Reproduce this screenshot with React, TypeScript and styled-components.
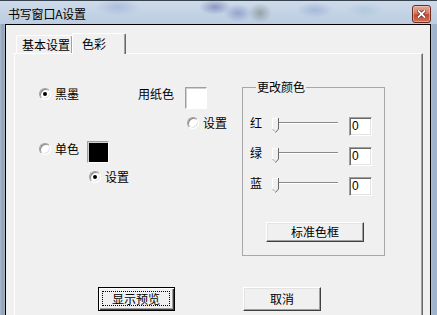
import React from 'react';
import styled, { createGlobalStyle } from 'styled-components';

const GlobalStyle = createGlobalStyle`
  html, body {
    margin: 0;
    padding: 0;
    background: #b9c9dc;
  }
  body {
    font-family: "Noto Sans CJK SC", "Liberation Sans", sans-serif;
    font-size: 12px;
    color: #000;
  }
`;

const Window = styled.div`
  width: 437px;
  height: 315px;
  overflow: hidden;
  display: flex;
  flex-direction: column;
  background: linear-gradient(90deg, #a9b9cb 0, #8fa1b6 3px, #b7c7da 6px, #b7c7da 430px, #9fb4cc 433px);
`;

const TitleBar = styled.div`
  height: 24px;
  flex: none;
  box-sizing: border-box;
  border-top: 1px solid #39434f;
  display: flex;
  align-items: flex-start;
  justify-content: space-between;
  padding: 0 6px 0 8px;
  background:
    radial-gradient(ellipse 22px 9px at 118px 6px, rgba(140, 160, 205, 0.45), transparent),
    radial-gradient(ellipse 16px 8px at 215px 6px, rgba(90, 100, 165, 0.55), transparent),
    radial-gradient(ellipse 14px 9px at 238px 12px, rgba(100, 118, 175, 0.5), transparent),
    radial-gradient(ellipse 12px 10px at 260px 12px, rgba(95, 105, 100, 0.45), transparent),
    radial-gradient(ellipse 18px 8px at 315px 9px, rgba(120, 140, 200, 0.4), transparent),
    radial-gradient(ellipse 18px 8px at 365px 9px, rgba(150, 185, 205, 0.4), transparent),
    linear-gradient(180deg, #cddaea 0, #c2d2e5 60%, #bccde2 100%);
`;

const Title = styled.span`
  margin-top: 6px;
  line-height: 14px;
  letter-spacing: -0.2px;
`;

const CloseButton = styled.div`
  width: 19px;
  height: 18px;
  margin-top: 4px;
  box-sizing: border-box;
  border: 1px solid #6b2b20;
  border-radius: 3px;
  display: flex;
  align-items: center;
  justify-content: center;
  background: linear-gradient(180deg, #e9a997 0, #d47c66 45%, #c04a33 55%, #d0705a 100%);
  box-shadow: inset 0 0 0 1px rgba(255, 220, 210, 0.45);
`;

const Client = styled.div`
  flex: none;
  height: 300px;
  margin: 0 6px 0 5px;
  border: 1px solid #000;
  border-bottom: none;
  background: #f0f0f0;
  display: flex;
  flex-direction: column;
`;

const TabStrip = styled.div`
  height: 28px;
  flex: none;
  display: flex;
  align-items: flex-end;
  padding-left: 10px;
`;

const Tab = styled.div<{ $active?: boolean; $width: number }>`
  width: ${(p) => p.$width}px;
  height: ${(p) => (p.$active ? 21 : 18)}px;
  box-sizing: border-box;
  margin-bottom: ${(p) => (p.$active ? -1 : 0)}px;
  margin-left: ${(p) => (p.$active ? -1 : 0)}px;
  position: relative;
  z-index: ${(p) => (p.$active ? 2 : 1)};
  border-top: 1px solid #fff;
  border-left: 1px solid #fff;
  border-right: 1px solid #696969;
  border-radius: 2px 2px 0 0;
  box-shadow: inset -1px 0 0 #a0a0a0;
  background: #f0f0f0;
  padding: ${(p) => (p.$active ? '3px 0 0 9px' : '2px 0 0 5px')};
  line-height: 14px;
  white-space: nowrap;
`;

const Panel = styled.div`
  flex: 1;
  margin: 0 7px 0 8px;
  border: 1px solid;
  border-color: #fff #696969 #696969 #fff;
  box-shadow: inset -1px 0 0 #a0a0a0;
  display: flex;
  flex-direction: column;
`;

const Content = styled.div`
  display: flex;
  align-items: flex-start;
`;

const LeftArea = styled.div`
  width: 227px;
  padding-top: 33px;
  display: flex;
  flex-direction: column;
`;

const Row = styled.div<{ $mt?: number; $ml?: number; $h?: number }>`
  display: flex;
  align-items: flex-start;
  margin-top: ${(p) => p.$mt ?? 0}px;
  padding-left: ${(p) => p.$ml ?? 0}px;
  height: ${(p) => p.$h ?? 14}px;
`;

const RadioItem = styled.label<{ $mt?: number }>`
  display: flex;
  align-items: center;
  gap: 4px;
  height: 14px;
  line-height: 14px;
  margin-top: ${(p) => p.$mt ?? 0}px;
  white-space: nowrap;
`;

const Radio = styled.span<{ $checked?: boolean }>`
  width: 12px;
  height: 12px;
  box-sizing: border-box;
  border-radius: 50%;
  border: 1px solid;
  border-color: #a0a0a0 #fff #fff #a0a0a0;
  box-shadow: inset 1px 1px 0 #8a8a8a, inset -1px -1px 0 #e3e3e3;
  background: #fff;
  display: flex;
  align-items: center;
  justify-content: center;
  &::after {
    content: '';
    width: 4px;
    height: 4px;
    border-radius: 50%;
    background: ${(p) => (p.$checked ? '#000' : 'transparent')};
  }
`;

const Text = styled.span<{ $ml?: number; $mt?: number }>`
  line-height: 14px;
  margin-left: ${(p) => p.$ml ?? 0}px;
  margin-top: ${(p) => p.$mt ?? 0}px;
  white-space: nowrap;
`;

const Swatch = styled.div<{ $color: string; $ml: number }>`
  width: 22px;
  height: 22px;
  box-sizing: border-box;
  margin-left: ${(p) => p.$ml}px;
  border: 1px solid;
  border-color: #a0a0a0 #fff #fff #a0a0a0;
  box-shadow: inset 1px 1px 0 #d0d0d0;
  background: ${(p) => p.$color};
`;

const GroupBox = styled.fieldset`
  width: 143px;
  box-sizing: border-box;
  margin: 27px 0 0 0;
  padding: 24px 0 13px 7px;
  border: 1px solid #a8a8a8;
  min-inline-size: 0;
  display: flex;
  flex-direction: column;
  gap: 11px;
`;

const Legend = styled.legend`
  padding: 0 1px;
  margin-left: 6px;
  line-height: 12px;
  height: 12px;
`;

const SliderRow = styled.div`
  display: flex;
  align-items: flex-start;
  height: 19px;
`;

const SliderLabel = styled.span`
  width: 12px;
  line-height: 14px;
  margin-top: -1px;
`;

const Slider = styled.div`
  position: relative;
  width: 67px;
  height: 19px;
  margin-left: 10px;
`;

const Track = styled.div`
  margin: 5px 0 0 5px;
  width: 61px;
  height: 0;
  border-top: 1px solid #8a8a8a;
  border-bottom: 1px solid #fff;
`;

const Thumb = styled.svg`
  position: absolute;
  left: 0;
  top: 1px;
`;

const Edit = styled.div`
  width: 23px;
  height: 19px;
  box-sizing: border-box;
  margin-left: 10px;
  border: 1px solid;
  border-color: #a0a0a0 #fff #fff #a0a0a0;
  box-shadow: inset 1px 1px 0 #696969, inset -1px -1px 0 #e3e3e3;
  background: #fff;
  padding: 1px 0 0 2px;
  font-family: "Liberation Sans", sans-serif;
  font-size: 12px;
  line-height: 15px;
`;

const Button = styled.div<{ $default?: boolean; $w: number; $h: number; $ml?: number; $mt?: number }>`
  width: ${(p) => p.$w}px;
  height: ${(p) => p.$h}px;
  box-sizing: border-box;
  margin-left: ${(p) => p.$ml ?? 0}px;
  margin-top: ${(p) => p.$mt ?? 0}px;
  display: flex;
  align-items: center;
  justify-content: center;
  background: #f0f0f0;
  border: 1px solid;
  border-color: ${(p) => (p.$default ? '#000' : '#fff #404040 #404040 #fff')};
  box-shadow: ${(p) =>
    p.$default
      ? 'inset 1px 1px 0 #fff, inset -1px -1px 0 #404040, inset -2px -2px 0 #a0a0a0'
      : 'inset -1px -1px 0 #a0a0a0, inset 1px 1px 0 #e3e3e3'};
  line-height: 14px;
  flex: none;
`;

const FocusRing = styled.span`
  flex: 1;
  align-self: stretch;
  margin: 3px 4px 4px 3px;
  border: 1px dotted #000;
  display: flex;
  align-items: center;
  justify-content: center;
`;

const ButtonRow = styled.div`
  display: flex;
  margin-top: 31px;
  padding-left: 83px;
  gap: 68px;
`;

function RadioOption({ label, checked, mt }: { label: string; checked?: boolean; mt?: number }) {
  return (
    <RadioItem $mt={mt}>
      <Radio $checked={checked} />
      <span>{label}</span>
    </RadioItem>
  );
}

function ColorSlider({ label }: { label: string }) {
  return (
    <SliderRow>
      <SliderLabel>{label}</SliderLabel>
      <Slider>
        <Track />
        <Thumb width="7" height="15" viewBox="0 0 7 15">
          <polygon points="0,0 6,0 6,11 3,14 0,11" fill="#f0f0f0" />
          <path d="M0.5 11 V0.5 H6" stroke="#fff" fill="none" />
          <path d="M6.5 0 V11 L3.5 14.5" stroke="#696969" fill="none" />
          <path d="M0.5 11 L3 13.5" stroke="#a0a0a0" fill="none" />
        </Thumb>
      </Slider>
      <Edit>0</Edit>
    </SliderRow>
  );
}

export default function App() {
  return (
    <>
      <GlobalStyle />
      <Window>
        <TitleBar>
          <Title>书写窗口A设置</Title>
          <CloseButton>
            <svg width="9" height="8" viewBox="0 0 9 8">
              <path d="M1.5 1 L7.5 7 M7.5 1 L1.5 7" stroke="#5a2218" strokeWidth="3.2" strokeLinecap="square" />
              <path d="M1.5 1 L7.5 7 M7.5 1 L1.5 7" stroke="#fff" strokeWidth="1.8" strokeLinecap="square" />
            </svg>
          </CloseButton>
        </TitleBar>
        <Client>
          <TabStrip>
            <Tab $width={57}>基本设置</Tab>
            <Tab $active $width={54}>色彩</Tab>
          </TabStrip>
          <Panel>
            <Content>
              <LeftArea>
                <Row $h={22} $ml={24}>
                  <RadioOption label="黑墨" checked />
                  <Text $ml={59}>用纸色</Text>
                  <Swatch $color="#fff" $ml={11} />
                </Row>
                <Row $mt={7} $ml={172}>
                  <RadioOption label="设置" />
                </Row>
                <Row $mt={11} $h={22} $ml={24}>
                  <RadioOption label="单色" mt={1} />
                  <Swatch $color="#000" $ml={8} />
                </Row>
                <Row $mt={7} $ml={74}>
                  <RadioOption label="设置" checked />
                </Row>
              </LeftArea>
              <GroupBox>
                <Legend>更改颜色</Legend>
                <ColorSlider label="红" />
                <ColorSlider label="绿" />
                <ColorSlider label="蓝" />
                <Button $w={98} $h={20} $ml={16} $mt={15}>
                  标准色框
                </Button>
              </GroupBox>
            </Content>
            <ButtonRow>
              <Button $default $w={77} $h={24}>
                <FocusRing>显示预览</FocusRing>
              </Button>
              <Button $w={78} $h={24}>
                取消
              </Button>
            </ButtonRow>
          </Panel>
        </Client>
      </Window>
    </>
  );
}
